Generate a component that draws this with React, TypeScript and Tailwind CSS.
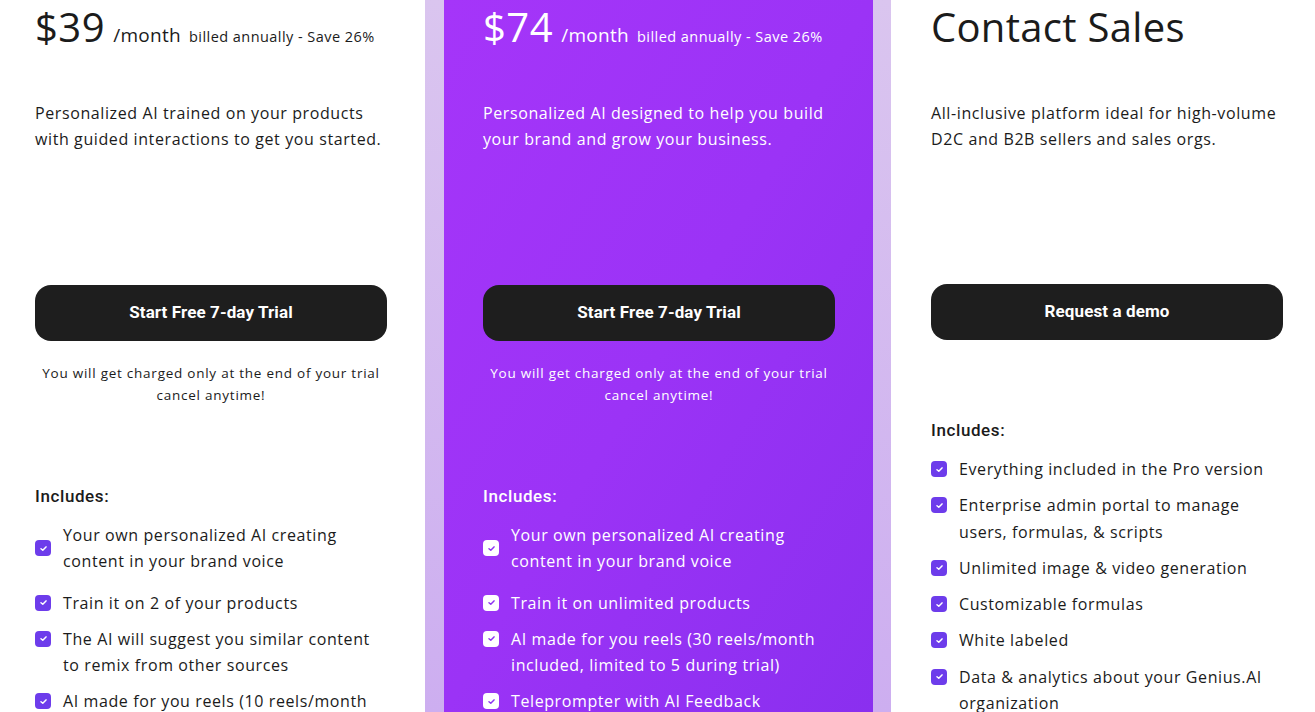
import React from "react";

const body = "font-['Open_Sans',sans-serif]";

function Check({ light }: { light?: boolean }) {
  return (
    <span
      className={`flex h-4 w-4 shrink-0 items-center justify-center rounded-[4px] ${
        light ? "bg-white" : "bg-[#6d3ceb]"
      }`}
    >
      <svg width="9" height="9" viewBox="0 0 10 10" fill="none">
        <path
          d="M2.2 5.2 L4.2 7 L7.8 3.2"
          stroke={light ? "#8e33f2" : "#ffffff"}
          strokeWidth="1.6"
          strokeLinecap="round"
          strokeLinejoin="round"
        />
      </svg>
    </span>
  );
}

function Item({ lines, light, first }: { lines: string[]; light?: boolean; first?: boolean }) {
  return (
    <li className={`flex gap-3 ${first ? "mb-[15px] items-center" : "mb-[10px] items-start"}`}>
      <span className={first ? "" : "mt-[5px]"}>
        <Check light={light} />
      </span>
      <span className="whitespace-nowrap">
        {lines.map((l, i) => (
          <React.Fragment key={i}>
            {i > 0 && <br />}
            {l}
          </React.Fragment>
        ))}
      </span>
    </li>
  );
}

function Price({ amount, light }: { amount: string; light?: boolean }) {
  return (
    <div className={`flex items-baseline whitespace-nowrap pt-[4px] ${light ? "text-white" : "text-[#1b1b1b]"}`}>
      <span className="text-[40px] leading-[46px] tracking-[0.5px]">{amount}</span>
      <span className="ml-[8px] text-[19px] tracking-[0.3px]">/month</span>
      <span className="ml-[8px] text-[14.5px] tracking-[0.45px]">billed annually - Save 26%</span>
    </div>
  );
}

function Button({ label }: { label: string }) {
  return (
    <div className="flex h-[56px] w-[352px] items-center justify-center rounded-[16px] bg-[#1e1e1e] font-['Roboto',sans-serif] text-[17px] font-bold tracking-[0.1px] text-white">
      {label}
    </div>
  );
}

function Note({ light }: { light?: boolean }) {
  return (
    <p className={`mt-[21px] w-[352px] text-center text-[13.5px] leading-[22px] tracking-[0.75px] ${light ? "text-white" : "text-[#1b1b1b]"}`}>
      You will get charged only at the end of your trial
      <br />
      cancel anytime!
    </p>
  );
}

function Includes({ light }: { light?: boolean }) {
  return (
    <p className={`font-['Roboto',sans-serif] text-[17px] font-medium leading-[24px] ${light ? "text-white" : "text-[#1b1b1b]"}`}>
      Includes:
    </p>
  );
}

export default function App() {
  return (
    <div className={`flex h-[712px] w-[1315px] overflow-hidden bg-white ${body} text-[16px] tracking-[0.6px]`}>
      {/* Left */}
      <div className="w-[425px] shrink-0 pl-[35px] text-[#1b1b1b]">
        <Price amount="$39" />
        <p className="mt-[50px] text-[16px] leading-[26px]">
          Personalized AI trained on your products
          <br />
          with guided interactions to get you started.
        </p>
        <div className="mt-[133px]">
          <Button label="Start Free 7-day Trial" />
        </div>
        <Note />
        <div className="mt-[78px]">
          <Includes />
        </div>
        <ul className="mt-[14px] leading-[26.3px]">
          <Item first lines={["Your own personalized AI creating", "content in your brand voice"]} />
          <Item lines={["Train it on 2 of your products"]} />
          <Item lines={["The AI will suggest you similar content", "to remix from other sources"]} />
          <Item lines={["AI made for you reels (10 reels/month", "included, limited to 5 during trial)"]} />
        </ul>
      </div>

      {/* Middle */}
      <div className="w-[466px] shrink-0 bg-gradient-to-b from-[#dac5ef] to-[#cdaef0] pl-[19px] pr-[18px]">
        <div className="h-full bg-gradient-to-br from-[#a535f9] via-[#9b33f6] to-[#8a2fef] pl-[39px] text-white">
          <Price amount="$74" light />
          <p className="mt-[50px] text-[16px] leading-[26px]">
            Personalized AI designed to help you build
            <br />
            your brand and grow your business.
          </p>
          <div className="mt-[133px]">
            <Button label="Start Free 7-day Trial" />
          </div>
          <Note light />
          <div className="mt-[78px]">
            <Includes light />
          </div>
          <ul className="mt-[14px] leading-[26.3px]">
            <Item light first lines={["Your own personalized AI creating", "content in your brand voice"]} />
            <Item light lines={["Train it on unlimited products"]} />
            <Item light lines={["AI made for you reels (30 reels/month", "included, limited to 5 during trial)"]} />
            <Item light lines={["Teleprompter with AI Feedback"]} />
          </ul>
        </div>
      </div>

      {/* Right */}
      <div className="flex-1 pl-[40px] text-[#1b1b1b]">
        <h2 className="whitespace-nowrap pt-[4px] text-[40px] leading-[46px] tracking-[0.3px]">Contact Sales</h2>
        <p className="mt-[50px] text-[16px] leading-[26px]">
          All-inclusive platform ideal for high-volume
          <br />
          D2C and B2B sellers and sales orgs.
        </p>
        <div className="mt-[132px]">
          <Button label="Request a demo" />
        </div>
        <div className="mt-[78px]">
          <Includes />
        </div>
        <ul className="mt-[14px] leading-[26.3px]">
          <Item lines={["Everything included in the Pro version"]} />
          <Item lines={["Enterprise admin portal to manage", "users, formulas, & scripts"]} />
          <Item lines={["Unlimited image & video generation"]} />
          <Item lines={["Customizable formulas"]} />
          <Item lines={["White labeled"]} />
          <Item lines={["Data & analytics about your Genius.AI", "organization"]} />
        </ul>
      </div>
    </div>
  );
}
